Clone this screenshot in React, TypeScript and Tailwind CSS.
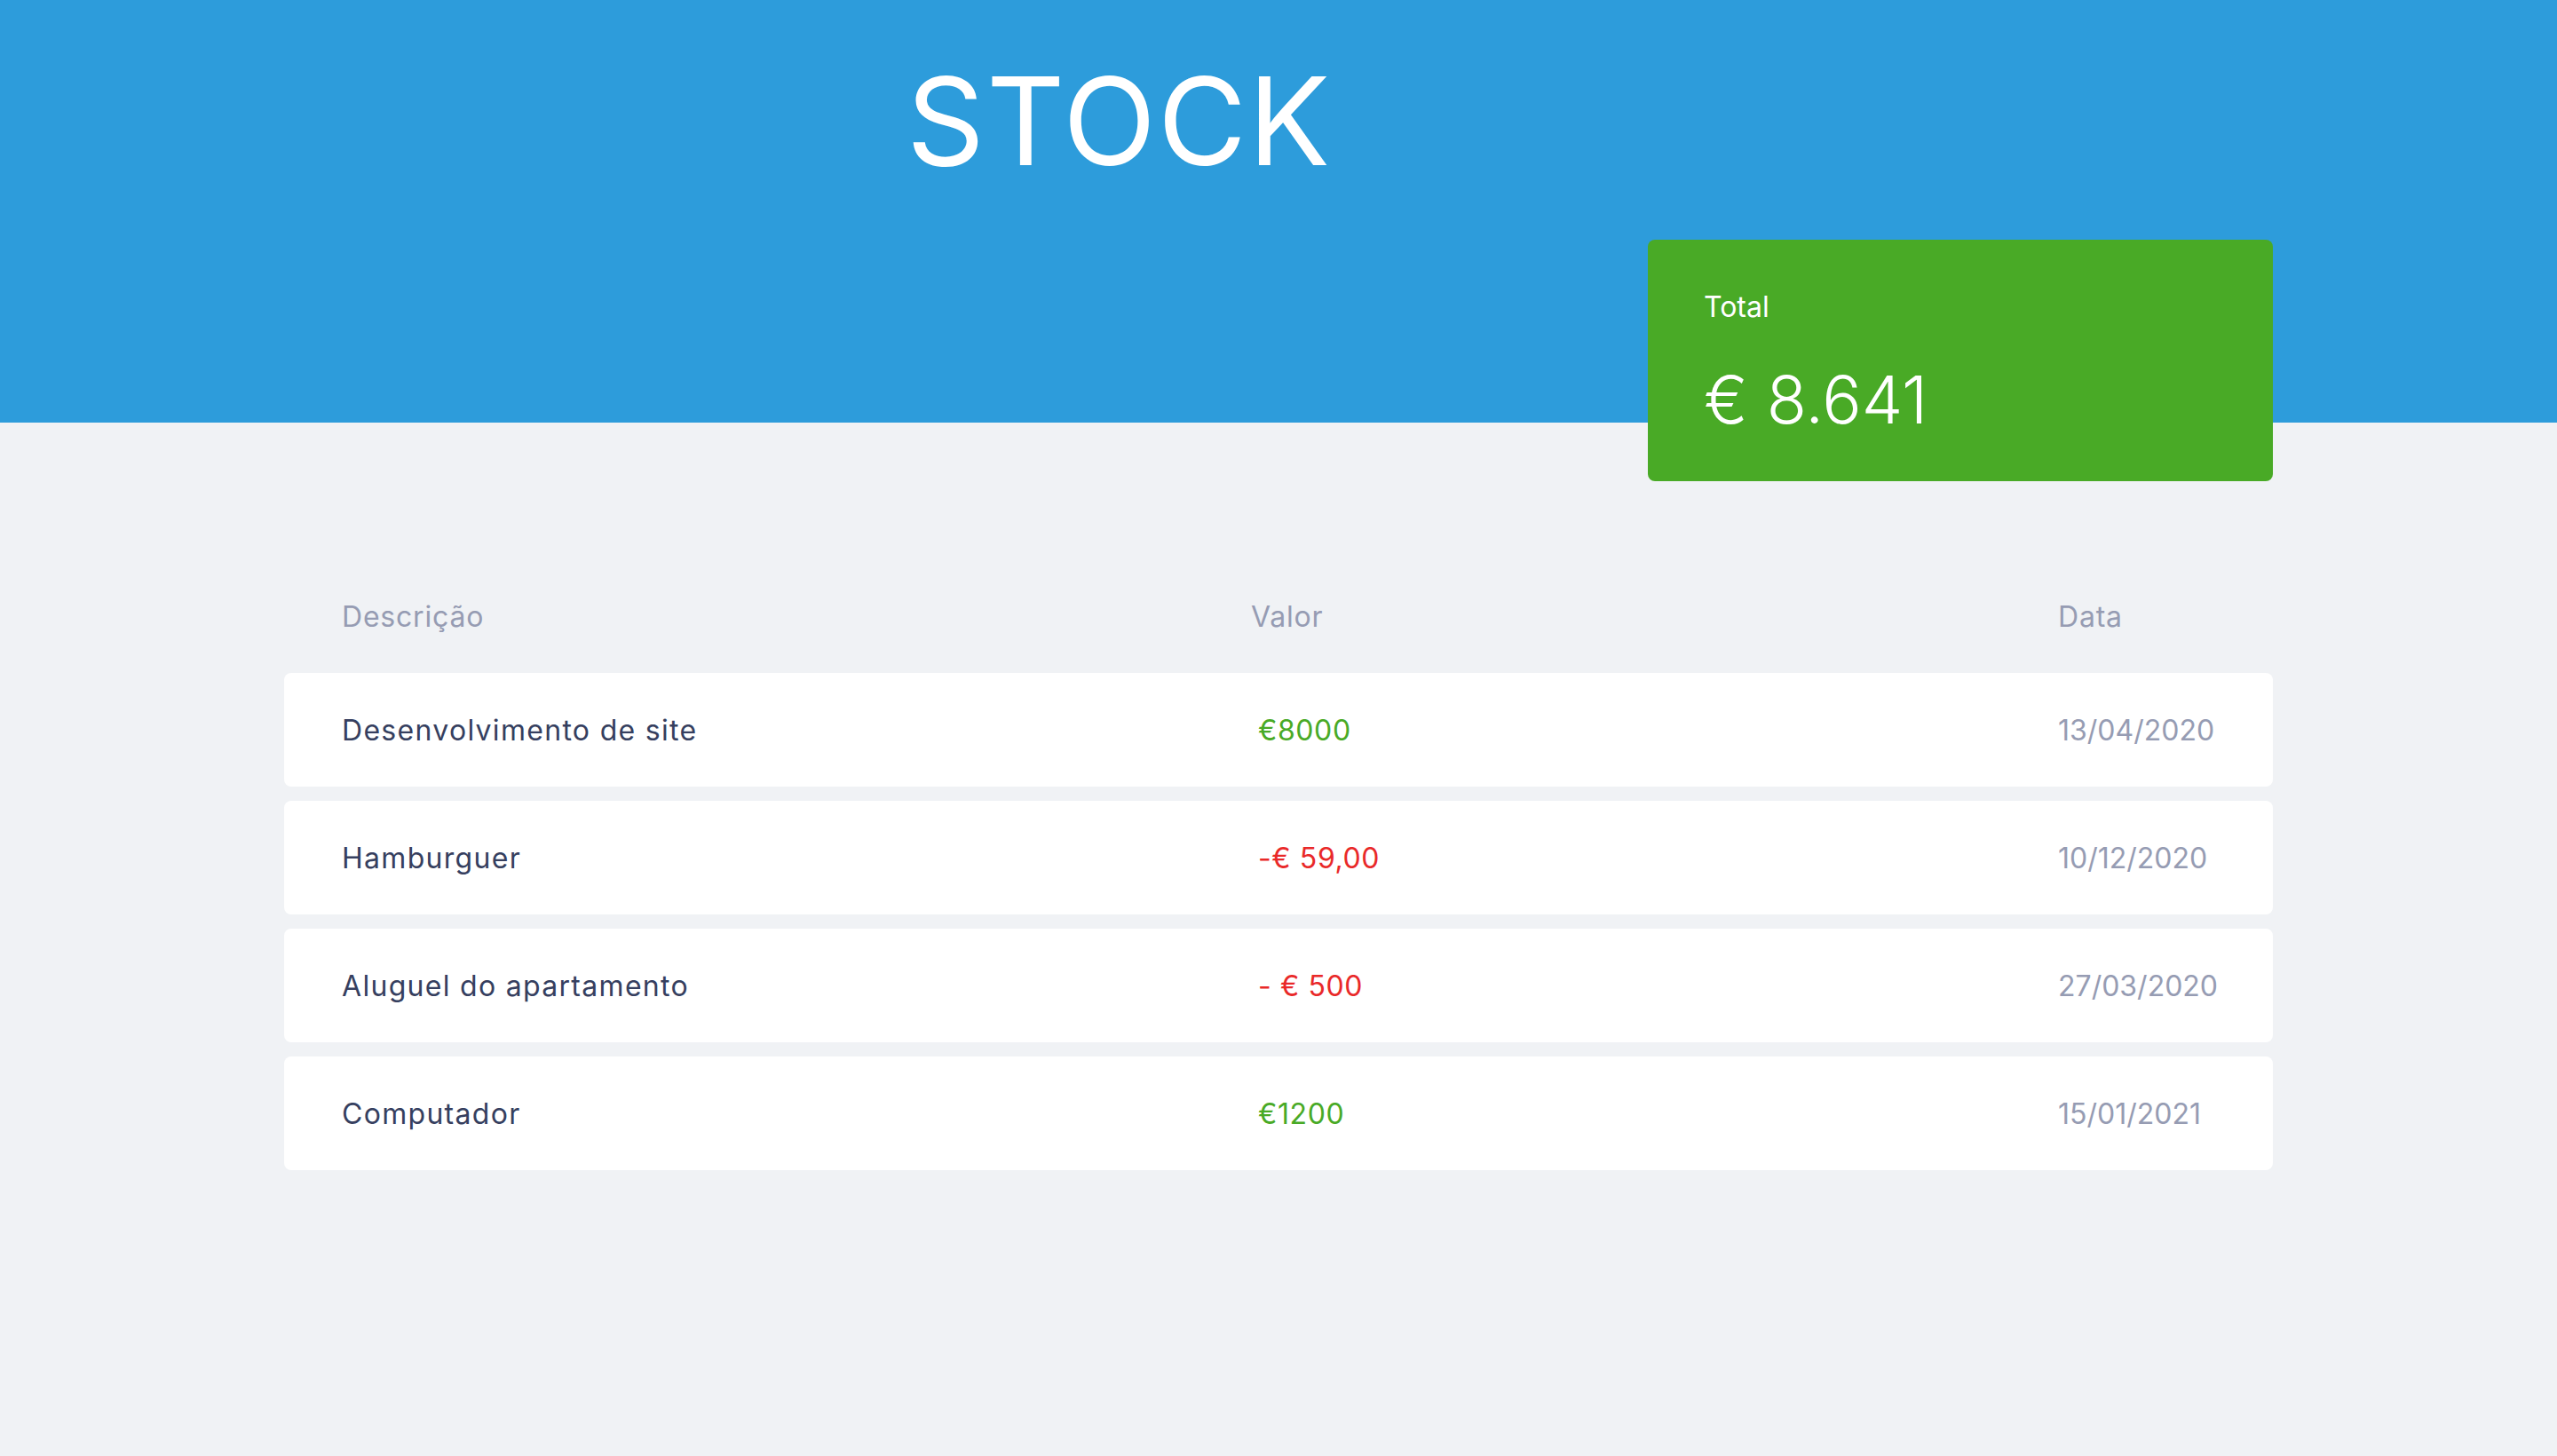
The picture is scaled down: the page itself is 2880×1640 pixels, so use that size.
import React from "react";

type Transaction = {
  description: string;
  amount: string;
  income: boolean;
  date: string;
};

const transactions: Transaction[] = [
  { description: "Desenvolvimento de site", amount: "€8000", income: true, date: "13/04/2020" },
  { description: "Hamburguer", amount: "-€ 59,00", income: false, date: "10/12/2020" },
  { description: "Aluguel do apartamento", amount: "- € 500", income: false, date: "27/03/2020" },
  { description: "Computador", amount: "€1200", income: true, date: "15/01/2021" },
];

const App = () => {
  return (
    <div className="min-h-screen bg-[#f0f2f5] font-['Inter','Noto_Sans',sans-serif]">
      <header className="h-[476px] bg-[#2d9cdb]">
        <div className="w-[2240px] mx-auto pl-[701px] pt-[68px]">
          <h1 className="text-white text-[137px] leading-none font-normal tracking-[2px]">STOCK</h1>
        </div>
      </header>

      <main className="w-[2240px] mx-auto">
        {/* Balance */}
        <section className="-mt-[206px] flex justify-end">
          <div className="w-[704px] h-[272px] rounded-[8px] bg-[#49aa26] text-white pt-[52px] px-[63px]">
            <h3 className="text-[32px] leading-[48px] font-normal">Total</h3>
            <p className="mt-[32px] text-[74px] leading-[96px] font-light">€ 8.641</p>
          </div>
        </section>

        {/* Transactions */}
        <section className="mt-[129px]">
          <div className="flex pl-[65px] text-[32px] leading-[48px] tracking-[0.8px] text-[#969cb3]">
            <span className="w-[1024px]">Descrição</span>
            <span className="w-[909px]">Valor</span>
            <span className="flex-1">Data</span>
          </div>

          <div className="mt-[39px] flex flex-col gap-[16px]">
            {transactions.map((t) => (
              <div
                key={t.description}
                className="h-[128px] flex items-center bg-white rounded-[8px] pl-[65px] pt-[2px] text-[32px] leading-[48px]"
              >
                <span className="w-[1024px] text-[#363f5f] tracking-[1.3px]">{t.description}</span>
                <span
                  className={
                    "w-[909px] pl-[8px] tracking-[0.6px] " +
                    (t.income ? "text-[#49aa26]" : "text-[#e92929]")
                  }
                >
                  {t.amount}
                </span>
                <span className="flex-1 text-[#969cb3]">{t.date}</span>
              </div>
            ))}
          </div>
        </section>
      </main>
    </div>
  );
};

export default App;
